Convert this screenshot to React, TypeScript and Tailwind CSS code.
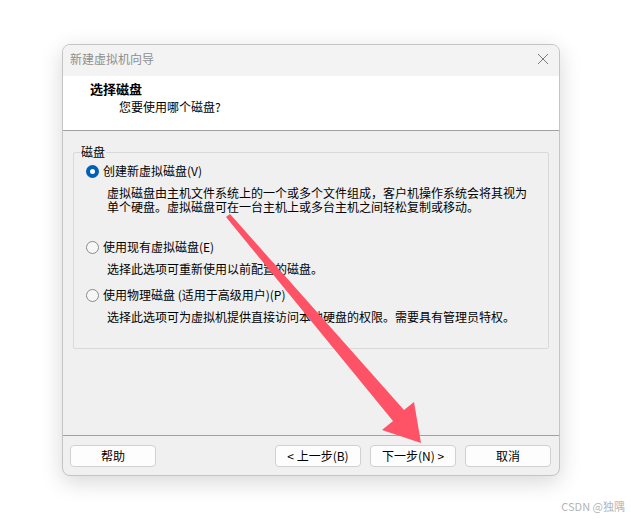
import React from "react";

const font = { fontFamily: '"Noto Sans CJK SC", "Noto Sans", sans-serif' };

function Radio({ checked = false }: { checked?: boolean }) {
  if (checked) {
    return (
      <span className="w-[13px] h-[13px] rounded-full bg-[#005fb8] flex items-center justify-center shrink-0">
        <span className="w-[5px] h-[5px] rounded-full bg-white" />
      </span>
    );
  }
  return <span className="w-[13px] h-[13px] rounded-full border border-[#8a8a8a] bg-[#f7f7f7] shrink-0" />;
}

function Option({
  label,
  desc,
  checked,
}: {
  label: string;
  desc: string[];
  checked?: boolean;
}) {
  return (
    <div>
      <div className="flex items-center gap-[4px] h-[16px]">
        <Radio checked={checked} />
        <span className="text-[12px] leading-[16px] text-black">{label}</span>
      </div>
      <div className="pl-[21px] mt-[7px]">
        {desc.map((d) => (
          <div key={d} className="h-[14px] text-[12px] leading-[14px] text-black whitespace-nowrap">
            {d}
          </div>
        ))}
      </div>
    </div>
  );
}

function Btn({ children }: { children: React.ReactNode }) {
  return (
    <button className="w-[86px] h-[22px] bg-[#fdfdfd] border border-[#d0d0d0] rounded-[4px] text-[12px] leading-[20px] text-black">
      {children}
    </button>
  );
}

export default function App() {
  return (
    <div className="relative w-[631px] h-[520px] bg-white overflow-hidden" style={font}>
      <div className="pt-[44px] pl-[62px]">
        <div className="w-[498px] h-[432px] rounded-[8px] border border-[#c4c4c4] bg-[#f0f0f0] overflow-hidden flex flex-col shadow-[0_6px_22px_rgba(0,0,0,0.16)]">
          {/* title bar */}
          <div className="h-[31px] bg-[#f3f3f3] flex items-center justify-between pl-[7px] pr-[9px] pb-[4px] shrink-0">
            <span className="text-[12px] leading-[16px] text-[#8f8f8f]">新建虚拟机向导</span>
            <svg width="12" height="12" viewBox="0 0 12 12" className="mr-[1px]">
              <path d="M1 1 L11 11 M11 1 L1 11" stroke="#7a7a7a" strokeWidth="1" fill="none" />
            </svg>
          </div>
          {/* header */}
          <div className="h-[55px] bg-white border-b border-[#a0a0a0] shrink-0 pt-[4px]">
            <div className="pl-[27px] text-[13px] leading-[18px] font-bold text-black">选择磁盘</div>
            <div className="pl-[56px] text-[12px] leading-[18px] text-black">您要使用哪个磁盘?</div>
          </div>
          {/* body */}
          <div className="flex-1 px-[10px] pt-[14px]">
            <fieldset className="h-[204px] border border-[#d9d9d9] rounded-[2px] pl-[12px] pr-[4px] pt-[4px]">
              <legend className="ml-[-6px] px-[1px] text-[12px] leading-[14px] text-black">磁盘</legend>
              <div className="flex flex-col">
                <Option
                  checked
                  label="创建新虚拟磁盘(V)"
                  desc={[
                    "虚拟磁盘由主机文件系统上的一个或多个文件组成，客户机操作系统会将其视为",
                    "单个硬盘。虚拟磁盘可在一台主机上或多台主机之间轻松复制或移动。",
                  ]}
                />
                <div className="mt-[25px]">
                  <Option label="使用现有虚拟磁盘(E)" desc={["选择此选项可重新使用以前配置的磁盘。"]} />
                </div>
                <div className="mt-[11px]">
                  <Option
                    label="使用物理磁盘 (适用于高级用户)(P)"
                    desc={["选择此选项可为虚拟机提供直接访问本地硬盘的权限。需要具有管理员特权。"]}
                  />
                </div>
              </div>
            </fieldset>
          </div>
          {/* footer */}
          <div className="h-[40px] border-t border-[#a0a0a0] shrink-0 flex items-start pt-[9px] pl-[7px] pr-[8px]">
            <Btn>帮助</Btn>
            <div className="flex-1" />
            <div className="flex gap-[9px]">
              <Btn>&lt; 上一步(B)</Btn>
              <Btn>下一步(N) &gt;</Btn>
              <Btn>取消</Btn>
            </div>
          </div>
        </div>
      </div>

      {/* annotation arrow */}
      <svg className="absolute left-0 top-0 pointer-events-none" width="631" height="520" viewBox="0 0 631 520">
        <polygon
          points="226,217 230,214 404,410 414,402 421,443 382,430 393,421"
          fill="#fe5367"
        />
      </svg>

      <div className="absolute right-[6px] bottom-[6px] text-[11px] text-[#b5b5b5]">CSDN @独隅</div>
    </div>
  );
}
